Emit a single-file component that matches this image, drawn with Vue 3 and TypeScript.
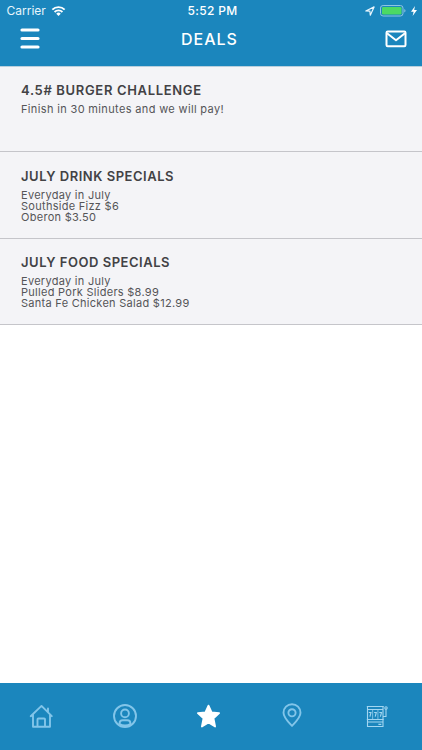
<script setup lang="ts">
interface Deal {
  title: string
  body: string
}

const deals: Deal[] = [
  { title: '4.5# BURGER CHALLENGE', body: 'Finish in 30 minutes and we will pay!' },
  { title: 'JULY DRINK SPECIALS', body: 'Everyday in July\nSouthside Fizz $6\nOberon $3.50' },
  { title: 'JULY FOOD SPECIALS', body: 'Everyday in July\nPulled Pork Sliders $8.99\nSanta Fe Chicken Salad $12.99' },
]
</script>

<template>
  <div class="screen">
    <header class="header">
      <div class="status">
        <div class="carrier">
          <span>Carrier</span>
          <svg width="15" height="12" viewBox="0 0 16 12" fill="none" stroke="#fff" stroke-width="2">
            <path d="M1.4 4.6a9.4 9.4 0 0 1 13.2 0M3.8 7.1a6 6 0 0 1 8.4 0" />
            <path d="M8 11.2 5.6 8.8a3.4 3.4 0 0 1 4.8 0Z" fill="#fff" stroke="none" />
          </svg>
        </div>
        <time>5:52 PM</time>
        <div class="power">
          <svg width="10" height="10" viewBox="0 0 10 10" fill="none" stroke="#e9f6fd" stroke-width="1.2" stroke-linejoin="round">
            <path d="M.8 5 9.1.9 5.3 9.2 4.9 5.2Z" />
          </svg>
          <svg width="26" height="12" viewBox="0 0 26 12">
            <rect x=".5" y=".5" width="22.5" height="10.5" rx="2.6" fill="none" stroke="#8fc5e2" />
            <rect x="2" y="2" width="19.5" height="7.5" rx="1.3" fill="#4cd964" />
            <path d="M24.3 4v3.6q1.2-.5 1.2-1.8T24.3 4Z" fill="#8fc5e2" />
          </svg>
          <svg width="6" height="10" viewBox="0 0 6 10" fill="#fff"><path d="M4 0 0 5.7h2.6L1.6 10 6 4.1H3.2Z" /></svg>
        </div>
      </div>
      <div class="nav">
        <svg class="menu" width="20" height="22" viewBox="0 0 20 22" fill="none" stroke="#fff" stroke-width="3.2" stroke-linecap="round">
          <path d="M2 2h16M2 10.500h16M2 19h16" />
        </svg>
        <h1>DEALS</h1>
        <svg class="mail" width="22" height="18" viewBox="0 0 22 18" fill="none" stroke="#fff" stroke-width="2" stroke-linejoin="round">
          <rect x="1.500" y="1.500" width="19" height="14.800" rx="1.200" />
          <path d="m2 3.200 9 7 9-7" />
        </svg>
      </div>
    </header>

    <main>
      <article v-for="deal in deals" :key="deal.title" class="deal">
        <h2>{{ deal.title }}</h2>
        <p>{{ deal.body }}</p>
      </article>
    </main>

    <footer class="tabs">
      <svg width="26" height="26" viewBox="0 0 26 26" fill="none" stroke="#82c5e9" stroke-width="1.9" stroke-linecap="round" stroke-linejoin="round">
        <path d="M2.700 13.200 13.500 2.900l10.300 10.300M5 11.400v12.300h17V11.400M9.500 23.500v-7.200q0-.8.8-.8h5.900q.8 0 .8.8v7.200M20 5.500v3.500" />
      </svg>
      <svg width="26" height="26" viewBox="0 0 26 26" fill="none" stroke="#82c5e9" stroke-width="1.900">
        <circle cx="13" cy="13" r="11" />
        <circle cx="13" cy="10.400" r="3.900" />
        <path d="M7.600 20.900v-.7c0-2 1.200-3 3-3h4.800c1.800 0 3 1 3 3v.7c-3 2.200-7.800 2.200-10.800 0Z" />
      </svg>
      <svg width="26" height="26" viewBox="0 0 26 26" fill="#fff" stroke="#fff" stroke-width="1.800" stroke-linejoin="round">
        <path d="m12.500 2.600 3.100 6.800 7.500.8-5.600 5.100 1.600 8.200-6.600-4-6.600 4 1.600-8.200-5.600-5.100 7.500-.8Z" />
      </svg>
      <svg width="26" height="26" viewBox="0 0 26 26" fill="none" stroke="#82c5e9" stroke-width="1.900" stroke-linejoin="round">
        <path d="M13 22.900C11 20.700 4.500 14.600 4.500 9.700a8.500 8.500 0 0 1 17 0c0 4.900-6.500 11-8.500 13.200Z" />
        <circle cx="13" cy="9.800" r="3.600" />
      </svg>
      <svg width="26" height="26" viewBox="0 0 26 26" fill="none" stroke="#a2d6f1" stroke-width="1.100">
        <path d="M4.500 3.500h15.500v20H4.500ZM3.800 3.500h17M4.500 6.500H20M3.800 16.500h17M4.500 19H20M20 13.500h3V6" />
        <path d="M9.600 6.500v10M14.900 6.500v10" stroke-opacity=".65" />
        <path d="M5.800 9.500H8l-1.100 4.200M11.100 9.500h2.200l-1.100 4.200M16.300 9.500h2.200l-1.100 4.200M15.400 21.400h2.900" />
        <circle cx="23" cy="4.900" r="1.200" />
      </svg>
    </footer>
  </div>
</template>

<style>
body {
  margin: 0;
}
</style>

<style scoped>
.screen {
  box-sizing: border-box;
  height: 750px;
  display: flex;
  flex-direction: column;
  background: #fff;
  font-family: Inter, sans-serif;
}
svg {
  display: block;
  flex: none;
}
.header {
  height: 66px;
  background: #1b86bd;
  color: #fff;
  border-bottom: 1px solid #b8cfdd;
}
.status {
  height: 22px;
  display: grid;
  grid-template-columns: 1fr auto 1fr;
  align-items: center;
  font-size: 12px;
  line-height: 22px;
}
.carrier {
  display: flex;
  align-items: center;
  gap: 5px;
  padding-left: 6.500px;
  color: #e7f5fc;
}
time {
  font-weight: 500;
  letter-spacing: 0.35px;
  padding-left: 3px;
}
.power {
  display: flex;
  align-items: center;
  justify-content: flex-end;
  gap: 5px;
  padding-right: 5px;
}
.nav {
  height: 34px;
  display: grid;
  grid-template-columns: 1fr auto 1fr;
  align-items: center;
}
.menu {
  margin-left: 20px;
}
.mail {
  justify-self: end;
  margin-right: 15px;
}
h1 {
  margin: 0 3px 0 0;
  font-size: 16px;
  line-height: 20px;
  font-weight: 500;
  letter-spacing: 1px;
}
main {
  flex: 1;
}
.deal {
  box-sizing: border-box;
  height: 86.500px;
  padding: 16px 21px 0;
  background: #f4f4f7;
  border-bottom: 1px solid #c5c5ca;
}
.deal:first-child {
  height: 85px;
  padding-top: 15px;
}
h2 {
  margin: 0 0 4.800px;
  color: #424245;
  font-size: 13px;
  line-height: 17px;
  font-weight: 600;
  letter-spacing: 0.530px;
}
.deal:first-child h2 {
  letter-spacing: 0.660px;
}
.deal:last-child {
  padding-top: 15.400px;
}
p {
  margin: 0;
  color: #555558;
  font-size: 11px;
  line-height: 11.200px;
  letter-spacing: 0.280px;
  white-space: pre;
}
.deal:first-child p {
  letter-spacing: 0.350px;
}
.tabs {
  height: 67px;
  box-sizing: border-box;
  padding-right: 5px;
  padding-bottom: 1px;
  display: grid;
  grid-template-columns: repeat(5, 83.700px);
  justify-content: center;
  justify-items: center;
  align-items: center;
  background: #1b86bd;
}
</style>
